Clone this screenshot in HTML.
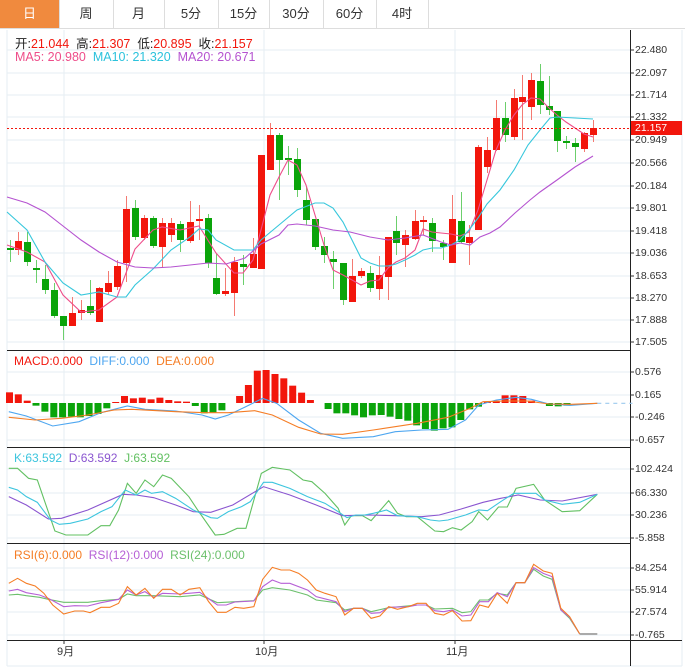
<!DOCTYPE html>
<html><head><meta charset="utf-8"><style>
html,body{margin:0;padding:0;background:#fff;width:685px;height:670px;overflow:hidden;font-family:"Liberation Sans","Noto Sans CJK SC",sans-serif}
.tabs{position:absolute;left:0;top:0;height:28px;width:685px;border-bottom:1px solid #ddd}
.tab{position:absolute;top:0;height:28px;line-height:28px;text-align:center;font-size:13px;color:#333;border-right:1px solid #ddd}
.tab.on{background:#f08a3e;color:#fff}
.t{position:absolute;font-size:12.5px;white-space:nowrap}
.ax{position:absolute;left:635px;font-size:10.5px;color:#333}
</style></head><body>
<div class="tabs">
<div class="tab on" style="left:0;width:59px">日</div>
<div class="tab" style="left:59px;width:54px">周</div>
<div class="tab" style="left:113px;width:51px">月</div>
<div class="tab" style="left:164px;width:54px">5分</div>
<div class="tab" style="left:218px;width:51px">15分</div>
<div class="tab" style="left:269px;width:54px">30分</div>
<div class="tab" style="left:323px;width:53px">60分</div>
<div class="tab" style="left:376px;width:52px">4时</div>
</div>
<svg id="s" width="685" height="670" style="position:absolute;left:0;top:0">
<g stroke="#e6edf3" stroke-width="1">
<line x1="7" y1="30" x2="7" y2="666"/><line x1="682" y1="30" x2="682" y2="666"/><line x1="7" y1="666" x2="682" y2="666"/>
<line x1="64" y1="30" x2="64" y2="640"/><line x1="264" y1="30" x2="264" y2="640"/><line x1="455" y1="30" x2="455" y2="640"/>
<line x1="7" y1="50" x2="630" y2="50"/><line x1="7" y1="73" x2="630" y2="73"/><line x1="7" y1="95" x2="630" y2="95"/><line x1="7" y1="117" x2="630" y2="117"/><line x1="7" y1="140" x2="630" y2="140"/><line x1="7" y1="163" x2="630" y2="163"/><line x1="7" y1="186" x2="630" y2="186"/><line x1="7" y1="208" x2="630" y2="208"/><line x1="7" y1="231" x2="630" y2="231"/><line x1="7" y1="253" x2="630" y2="253"/><line x1="7" y1="276" x2="630" y2="276"/><line x1="7" y1="298" x2="630" y2="298"/><line x1="7" y1="320" x2="630" y2="320"/><line x1="7" y1="342" x2="630" y2="342"/>
<line x1="7" y1="372" x2="630" y2="372"/><line x1="7" y1="395" x2="630" y2="395"/><line x1="7" y1="417" x2="630" y2="417"/><line x1="7" y1="440" x2="630" y2="440"/>
<line x1="7" y1="469" x2="630" y2="469"/><line x1="7" y1="493" x2="630" y2="493"/><line x1="7" y1="515" x2="630" y2="515"/><line x1="7" y1="538" x2="630" y2="538"/>
<line x1="7" y1="568" x2="630" y2="568"/><line x1="7" y1="590" x2="630" y2="590"/><line x1="7" y1="612" x2="630" y2="612"/><line x1="7" y1="635" x2="630" y2="635"/>
</g>
<g stroke="#222" stroke-width="1">
<line x1="630.5" y1="30" x2="630.5" y2="666"/>
<line x1="7" y1="350.5" x2="630" y2="350.5"/><line x1="7" y1="447.5" x2="630" y2="447.5"/><line x1="7" y1="543.5" x2="630" y2="543.5"/><line x1="7" y1="640.5" x2="682" y2="640.5"/>
</g>
<g id="cd"></g>
<g fill="none" stroke-width="1.1">
<polyline stroke="#ee4d8a" points="7,245 27,252 45,262 63,295 81,312 99,310 117,297 135,249 153,230 162,227 180,230 199,226 216,253 234,273 243,273 253,260 261,230 270,195 279,177 288,160 297,165 306,185 315,215 324,245 333,270 343,275 352,280 361,285 370,281 379,280 388,268 396,262 405,258 415,250 423,229 432,232 441,233 451,234 460,236 469,232 478,210 487,180 496,150 505,130 514,115 522,105 531,98 540,99 549,108 557,115 566,122 575,128 584,134 593,137"/>
<polyline stroke="#37c7dc" points="7,212 27,230 45,262 63,283 81,295 99,292 117,297 126,297 135,285 153,269 171,250 190,237 199,229 208,230 216,240 234,250 253,250 261,240 279,225 297,210 315,203 324,203 333,208 343,222 352,240 361,258 370,263 379,266 388,266 396,264 405,260 415,255 423,250 432,248 441,248 451,245 460,240 469,230 478,218 487,204 500,190 514,170 528,145 540,130 550,118 557,117 575,118 593,119"/>
<polyline stroke="#b553d0" points="7,197 27,203 45,212 63,226 81,240 99,252 117,262 135,267 153,268 171,267 190,265 208,263 226,264 245,258 261,244 279,235 288,225 297,224 315,226 333,230 350,232 370,237 388,240 405,238 423,235 441,242 451,245 460,243 470,245 480,237 490,233 500,227 515,213 530,200 540,192 557,180 575,167 593,156"/>
</g>
<line x1="7" y1="128.5" x2="630" y2="128.5" stroke="#f2160c" stroke-dasharray="2,2" stroke-width="1"/>
<rect x="631" y="121" width="51" height="14" fill="#f2160c"/>
<g id="mh" transform="translate(9,403)"></g>
<g transform="translate(0,340) scale(0.4392,0.3333)" fill="none" stroke-width="1.1">
<line x1="1360" y1="190" x2="1440" y2="190" stroke="#9cc9ee" stroke-dasharray="4,4" vector-effect="non-scaling-stroke"/>
<polyline vector-effect="non-scaling-stroke" stroke="#4da6f0" points="20,215 60,228 120,258 180,245 230,218 290,198 330,208 400,213 460,225 490,237 520,225 560,200 598,175 630,190 680,240 730,280 780,295 850,290 900,275 960,270 1020,268 1060,240 1090,195 1130,180 1175,172 1210,178 1250,192 1300,196 1360,190"/>
<polyline vector-effect="non-scaling-stroke" stroke="#f57d25" points="20,232 80,240 140,235 200,225 260,210 300,208 400,215 470,218 520,218 580,212 620,225 680,262 730,282 780,283 850,270 950,250 1020,232 1070,205 1100,185 1150,183 1200,183 1250,192 1300,193 1360,190"/>
</g>
<g transform="translate(0,445) scale(0.4392,0.3333)" fill="none" stroke-width="1.1">
<polyline vector-effect="non-scaling-stroke" stroke="#62c062" points="20,70 40,70 65,100 85,105 125,258 150,270 200,270 230,242 250,242 270,195 290,115 310,145 330,105 350,125 370,90 390,100 430,155 450,195 490,270 510,268 540,250 560,250 595,85 620,67 660,75 690,105 710,110 740,145 770,190 785,240 800,212 825,212 845,227 885,167 905,205 925,215 950,215 990,258 1010,260 1030,248 1050,255 1075,230 1090,200 1110,225 1135,186 1155,186 1175,130 1215,118 1240,165 1280,200 1320,197 1360,148"/>
<polyline vector-effect="non-scaling-stroke" stroke="#8a55d0" points="20,155 60,180 110,222 140,220 200,195 280,148 310,150 350,158 400,180 440,200 480,202 530,180 600,125 660,150 720,180 780,212 840,210 900,212 960,215 1000,210 1050,192 1100,172 1140,160 1180,150 1230,165 1280,168 1360,148"/>
<polyline vector-effect="non-scaling-stroke" stroke="#3dc5de" points="20,127 40,135 60,155 85,172 115,225 135,238 160,235 200,222 230,200 255,185 285,135 310,150 330,135 345,145 370,140 400,160 440,195 480,218 495,220 520,200 550,185 570,170 600,112 620,112 660,130 700,155 740,175 770,200 790,218 810,210 830,210 850,205 880,195 905,212 950,215 980,225 1000,228 1020,225 1060,210 1090,195 1110,197 1140,170 1170,145 1220,145 1240,165 1280,178 1320,172 1360,148"/>
</g>
<g transform="translate(0,540) scale(0.4392,0.3333)" fill="none" stroke-width="1.1">
<polyline vector-effect="non-scaling-stroke" stroke="#6cc06c" points="20,165 40,163 60,167 90,172 110,178 145,187 200,187 230,182 270,178 290,162 310,167 350,167 410,170 455,165 495,188 578,182 598,150 620,143 660,150 700,165 720,180 765,188 785,210 805,205 825,205 845,215 885,203 950,195 970,195 990,207 1030,205 1052,218 1072,215 1092,180 1112,180 1132,160 1155,165 1175,128 1195,128 1215,88 1237,108 1257,118 1277,210 1297,235 1320,282"/>
<polyline vector-effect="non-scaling-stroke" stroke="#b660d6" points="20,153 40,148 60,158 90,165 110,175 145,200 170,197 200,198 230,188 270,178 290,150 310,165 330,155 350,172 370,160 410,162 430,160 455,157 495,195 515,195 535,186 578,183 598,140 620,120 640,130 660,130 700,150 720,170 765,185 785,215 805,205 825,205 845,220 865,218 885,202 930,200 950,195 970,195 990,212 1010,215 1030,210 1052,228 1072,225 1092,185 1112,185 1132,158 1155,170 1175,128 1195,128 1215,83 1237,100 1257,110 1277,210 1297,232 1320,282"/>
<polyline vector-effect="non-scaling-stroke" stroke="#f57d25" points="20,130 40,115 60,130 80,138 100,160 120,195 145,222 170,213 190,213 205,218 230,202 250,202 270,190 290,140 310,165 330,145 350,175 370,148 390,148 410,165 430,148 455,143 475,185 495,217 515,217 535,202 555,205 578,200 598,118 620,82 640,90 660,90 680,100 700,120 720,150 740,160 765,170 785,225 805,205 825,205 845,235 865,228 885,200 905,208 930,200 950,190 970,190 990,220 1010,225 1030,212 1052,243 1072,242 1092,195 1112,202 1132,160 1155,190 1175,128 1195,128 1215,73 1237,93 1257,100 1277,205 1297,230 1320,282"/>
<line vector-effect="non-scaling-stroke" x1="1320" y1="282" x2="1360" y2="282" stroke="#aaa" stroke-width="2"/>
</g>
<g stroke="#333"><line x1="630" y1="50" x2="634" y2="50"/><line x1="630" y1="73" x2="634" y2="73"/><line x1="630" y1="95" x2="634" y2="95"/><line x1="630" y1="117" x2="634" y2="117"/><line x1="630" y1="140" x2="634" y2="140"/><line x1="630" y1="163" x2="634" y2="163"/><line x1="630" y1="186" x2="634" y2="186"/><line x1="630" y1="208" x2="634" y2="208"/><line x1="630" y1="231" x2="634" y2="231"/><line x1="630" y1="253" x2="634" y2="253"/><line x1="630" y1="276" x2="634" y2="276"/><line x1="630" y1="298" x2="634" y2="298"/><line x1="630" y1="320" x2="634" y2="320"/><line x1="630" y1="342" x2="634" y2="342"/>
<line x1="630" y1="372" x2="634" y2="372"/><line x1="630" y1="395" x2="634" y2="395"/><line x1="630" y1="417" x2="634" y2="417"/><line x1="630" y1="440" x2="634" y2="440"/><line x1="630" y1="469" x2="634" y2="469"/><line x1="630" y1="493" x2="634" y2="493"/><line x1="630" y1="515" x2="634" y2="515"/><line x1="630" y1="538" x2="634" y2="538"/><line x1="630" y1="568" x2="634" y2="568"/><line x1="630" y1="590" x2="634" y2="590"/><line x1="630" y1="612" x2="634" y2="612"/><line x1="630" y1="635" x2="634" y2="635"/>
<line x1="64" y1="640" x2="64" y2="644"/><line x1="264" y1="640" x2="264" y2="644"/><line x1="455" y1="640" x2="455" y2="644"/></g>
</svg>
<div class="t" style="left:15px;top:33px;color:#222">开:<span style="color:#f2160c">21.044</span>&nbsp; 高:<span style="color:#f2160c">21.307</span>&nbsp; 低:<span style="color:#f2160c">20.895</span>&nbsp; 收:<span style="color:#f2160c">21.157</span></div>
<div class="t" style="left:15px;top:50px"><span style="color:#ee4d8a">MA5: 20.980</span>&nbsp; <span style="color:#2cc2dc">MA10: 21.320</span>&nbsp; <span style="color:#b553d0">MA20: 20.671</span></div>
<div class="t" style="left:14px;top:354px;font-size:12px"><span style="color:#f2160c">MACD:0.000</span>&nbsp; <span style="color:#4da6f0">DIFF:0.000</span>&nbsp; <span style="color:#f57d25">DEA:0.000</span></div>
<div class="t" style="left:14px;top:451px;font-size:12px"><span style="color:#3dc5de">K:63.592</span>&nbsp; <span style="color:#8a55d0">D:63.592</span>&nbsp; <span style="color:#62c062">J:63.592</span></div>
<div class="t" style="left:14px;top:548px;font-size:12px"><span style="color:#f57d25">RSI(6):0.000</span>&nbsp; <span style="color:#b660d6">RSI(12):0.000</span>&nbsp; <span style="color:#6cc06c">RSI(24):0.000</span></div>
<div class="ax" style="top:44px">22.480</div><div class="ax" style="top:67px">22.097</div><div class="ax" style="top:89px">21.714</div><div class="ax" style="top:111px">21.332</div><div class="ax" style="top:122px;color:#fff">21.157</div><div class="ax" style="top:134px">20.949</div><div class="ax" style="top:157px">20.566</div><div class="ax" style="top:180px">20.184</div><div class="ax" style="top:202px">19.801</div><div class="ax" style="top:225px">19.418</div><div class="ax" style="top:247px">19.036</div><div class="ax" style="top:270px">18.653</div><div class="ax" style="top:292px">18.270</div><div class="ax" style="top:314px">17.888</div><div class="ax" style="top:336px">17.505</div>
<div class="ax" style="top:366px">0.576</div><div class="ax" style="top:389px">0.165</div><div class="ax" style="top:411px">-0.246</div><div class="ax" style="top:434px">-0.657</div>
<div class="ax" style="top:463px">102.424</div><div class="ax" style="top:487px">66.330</div><div class="ax" style="top:509px">30.236</div><div class="ax" style="top:532px">-5.858</div>
<div class="ax" style="top:562px">84.254</div><div class="ax" style="top:584px">55.914</div><div class="ax" style="top:606px">27.574</div><div class="ax" style="top:629px">-0.765</div>
<div class="t" style="left:57px;top:643px;font-size:11px;color:#333">9月</div>
<div class="t" style="left:255px;top:643px;font-size:11px;color:#333">10月</div>
<div class="t" style="left:446px;top:643px;font-size:11px;color:#333">11月</div>
<script>
var C=[[10,248,250,240,262,0],[18,241,250,232,255,1],[27,242,262,232,266,0],[36,268,270,260,283,0],[45,279,290,265,294,0],[54,290,316,283,318,0],[63,316,326,316,340,0],[72,313,326,297,326,1],[81,310,313,300,320,1],[90,306,313,280,315,0],[99,288,322,287,322,1],[108,283,292,271,295,1],[117,266,287,260,290,1],[126,209,263,196,282,1],[135,208,237,200,240,0],[144,218,238,215,240,1],[153,218,246,216,248,0],[162,223,247,218,268,1],[171,223,235,218,242,1],[180,224,240,221,252,0],[190,222,241,201,243,1],[199,219,221,205,240,1],[208,218,263,214,268,0],[216,278,294,254,295,0],[225,291,294,268,296,1],[234,262,293,257,316,1],[243,264,267,255,285,0],[253,254,268,238,268,1],[261,155,269,155,269,1],[270,135,170,123,170,1],[279,135,160,133,200,0],[288,158,160,146,175,0],[297,159,190,148,197,0],[306,200,220,186,225,0],[315,219,247,219,250,0],[324,246,255,237,263,0],[333,259,262,251,289,0],[343,263,300,263,305,0],[352,276,302,259,302,1],[361,271,276,268,278,1],[370,273,288,266,292,0],[379,275,289,256,300,1],[388,237,277,237,300,1],[396,231,243,216,255,0],[405,235,245,230,267,1],[415,221,239,210,240,1],[423,220,222,216,235,1],[432,223,241,218,252,0],[443,243,247,240,260,0],[452,219,263,195,263,1],[461,221,242,192,243,0],[469,237,243,225,265,1],[478,147,230,145,230,1],[487,150,167,137,173,1],[496,118,150,100,151,1],[505,118,135,102,142,0],[514,98,137,89,140,1],[522,97,102,75,140,1],[531,80,107,73,120,1],[540,81,105,64,114,0],[549,106,110,76,115,0],[557,111,141,111,152,0],[566,141,143,136,149,0],[575,143,147,138,162,0],[584,133,149,132,152,1],[593,128,135,120,142,1]];
var g=document.getElementById("cd"),h="";
C.forEach(function(c){var col=c[5]?"#f2160c":"#0aa40a",wc=c[5]?"#f47a72":"#6ccf6c";
h+='<line x1="'+(c[0]+.5)+'" y1="'+c[3]+'" x2="'+(c[0]+.5)+'" y2="'+c[4]+'" stroke="'+wc+'"/>';
h+='<rect x="'+(c[0]-3)+'" y="'+c[1]+'" width="7" height="'+Math.max(2,c[2]-c[1])+'" fill="'+col+'"/>';});
g.innerHTML=h;
var M=[157,163,182,197,215,232,232,230,232,228,222,205,186,168,175,173,178,173,180,184,185,198,220,218,211,188,168,135,92,90,102,115,137,158,180,189,207,220,220,226,232,226,225,230,237,242,256,267,272,265,262,240,208,200,185,182,166,166,168,182,188,198,199,197,190];
var s="";M.forEach(function(p,i){var v=(189-p)/3,x=i*8.85-3;if(Math.abs(v)<0.4)return;
s+='<rect x="'+x.toFixed(1)+'" y="'+(v>0?-v:0)+'" width="7" height="'+Math.abs(v)+'" fill="'+(v>0?"#f2160c":"#0aa40a")+'"/>';});
document.getElementById("mh").innerHTML=s;
</script>
</body></html>
